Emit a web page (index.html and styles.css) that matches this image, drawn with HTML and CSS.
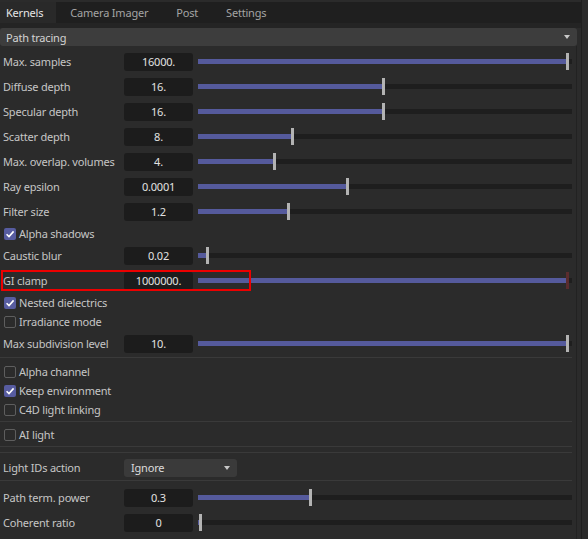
FILE: index.html
```html
<!DOCTYPE html>
<html>
<head>
<meta charset="utf-8">
<link rel="stylesheet" href="styles.css">
</head>
<body>
<div class="app">
  <div class="main">
    <div class="tabbar">
      <div class="tab active first">Kernels</div>
      <div class="tab">Camera Imager</div>
      <div class="tab">Post</div>
      <div class="tab">Settings</div>
    </div>
    <div class="strip"></div>
    <div class="header"><span>Path tracing</span><span class="tri"></span></div>
    <div class="content">
      <div class="row"><div class="label">Max. samples</div><div class="num">16000.</div><div class="slider"><div class="fill" style="width:368px"></div><div class="thumb" style="left:368px"></div></div></div>
      <div class="row"><div class="label">Diffuse depth</div><div class="num">16.</div><div class="slider"><div class="fill" style="width:184px"></div><div class="thumb" style="left:184px"></div></div></div>
      <div class="row"><div class="label">Specular depth</div><div class="num">16.</div><div class="slider"><div class="fill" style="width:184px"></div><div class="thumb" style="left:184px"></div></div></div>
      <div class="row"><div class="label">Scatter depth</div><div class="num">8.</div><div class="slider"><div class="fill" style="width:93px"></div><div class="thumb" style="left:93px"></div></div></div>
      <div class="row"><div class="label">Max. overlap. volumes</div><div class="num">4.</div><div class="slider"><div class="fill" style="width:75px"></div><div class="thumb" style="left:75px"></div></div></div>
      <div class="row"><div class="label">Ray epsilon</div><div class="num">0.0001</div><div class="slider"><div class="fill" style="width:148px"></div><div class="thumb" style="left:148px"></div></div></div>
      <div class="row"><div class="label">Filter size</div><div class="num">1.2</div><div class="slider"><div class="fill" style="width:89px"></div><div class="thumb" style="left:89px"></div></div></div>
      <div class="crow"><span class="cb on"><svg viewBox="0 0 12 12"><path d="M2.6 6.2 L5 8.6 L9.6 3.4" /></svg></span><span class="clabel">Alpha shadows</span></div>
      <div class="row"><div class="label">Caustic blur</div><div class="num">0.02</div><div class="slider"><div class="fill" style="width:8px"></div><div class="thumb" style="left:8px"></div></div></div>
      <div class="row hl"><div class="label">GI clamp</div><div class="num">1000000.</div><div class="slider"><div class="fill" style="width:368px"></div><div class="thumb red" style="left:368px"></div></div><div class="mark"></div></div>
      <div class="crow"><span class="cb on"><svg viewBox="0 0 12 12"><path d="M2.6 6.2 L5 8.6 L9.6 3.4" /></svg></span><span class="clabel">Nested dielectrics</span></div>
      <div class="crow"><span class="cb"></span><span class="clabel">Irradiance mode</span></div>
      <div class="row"><div class="label">Max subdivision level</div><div class="num">10.</div><div class="slider"><div class="fill" style="width:368px"></div><div class="thumb" style="left:368px"></div></div></div>
      <div class="sep s1"></div>
      <div class="crow"><span class="cb"></span><span class="clabel">Alpha channel</span></div>
      <div class="crow"><span class="cb on"><svg viewBox="0 0 12 12"><path d="M2.6 6.2 L5 8.6 L9.6 3.4" /></svg></span><span class="clabel">Keep environment</span></div>
      <div class="crow"><span class="cb"></span><span class="clabel">C4D light linking</span></div>
      <div class="sep s2"></div>
      <div class="crow"><span class="cb"></span><span class="clabel">AI light</span></div>
      <div class="sep s3"></div>
      <div class="sep s4"></div>
      <div class="row"><div class="label">Light IDs action</div><div class="drop"><span>Ignore</span><span class="tri"></span></div></div>
      <div class="sep s5"></div>
      <div class="row"><div class="label">Path term. power</div><div class="num">0.3</div><div class="slider"><div class="fill" style="width:111px"></div><div class="thumb" style="left:111px"></div></div></div>
      <div class="row"><div class="label">Coherent ratio</div><div class="num">0</div><div class="slider"><div class="fill" style="width:1px"></div><div class="thumb" style="left:1px"></div></div></div>
    </div>
  </div>
  <div class="side"></div>
</div>
</body>
</html>
```

FILE: styles.css
```css
* { box-sizing: border-box; }
html, body {
  margin: 0;
  padding: 0;
  background: #2b2b2b;
  width: 588px;
  height: 539px;
  overflow: hidden;
}
body {
  font-family: "Noto Sans", "Open Sans", sans-serif;
  font-size: 11px;
  letter-spacing: -0.2px;
  color: #c6c6c6;
}
.app {
  display: flex;
  height: 539px;
}
.main {
  width: 582px;
  border-right: 1px solid #1f1f1f;
  display: flex;
  flex-direction: column;
}
.side {
  flex: 1;
  background: #2b2b2b;
}
.tabbar {
  margin-top: 2px;
  height: 21px;
  background: #1f1f1f;
  display: flex;
  align-items: stretch;
}
.tab {
  padding: 0 14px;
  line-height: 21px;
  color: #a4a4a4;
  white-space: nowrap;
}
.tab.first { padding-left: 6px; padding-right: 13px; }
.tab.active {
  background: #292929;
  color: #e6e6e6;
}
.strip {
  height: 5px;
  background: #242424;
}
.header {
  width: 577px;
  height: 18px;
  background: #3d3d3d;
  border-radius: 3px;
  display: flex;
  align-items: center;
  justify-content: space-between;
  padding: 0 7px 0 6px;
  color: #d4d4d4;
}
.tri {
  width: 0;
  height: 0;
  border-left: 3.5px solid transparent;
  border-right: 3.5px solid transparent;
  border-top: 4px solid #c8c8c8;
}
.content {
  width: 577px;
  border-right: 1px solid #222;
  padding-top: 3px;
  padding-right: 4px;
  flex: 1;
}
.row {
  height: 25px;
  display: flex;
  align-items: center;
  position: relative;
}
.label {
  width: 124px;
  padding-left: 3px;
  white-space: nowrap;
}
.num {
  width: 69px;
  height: 18px;
  background: #1c1c1c;
  border-radius: 3px;
  text-align: center;
  line-height: 18px;
  color: #e2e2e2;
}
.slider {
  margin-left: 5px;
  width: 374px;
  height: 5px;
  background: #1e1e1e;
  position: relative;
}
.fill {
  height: 5px;
  background: #555a9c;
}
.thumb {
  position: absolute;
  top: -6px;
  width: 3px;
  height: 17px;
  background: #b3b3b3;
}
.thumb.red { background: #5a2c2d; }
.mark {
  position: absolute;
  left: 1px;
  top: 2px;
  width: 250px;
  height: 21px;
  border: 2px solid #ec0000;
}
.crow {
  height: 19px;
  display: flex;
  align-items: center;
  padding-left: 4px;
}
.cb {
  width: 12px;
  height: 12px;
  border: 1.5px solid #5e5e5e;
  border-radius: 2px;
  margin-right: 3px;
  display: inline-flex;
}
.cb.on {
  background: #575ca0;
  border: none;
}
.cb svg {
  width: 12px;
  height: 12px;
  fill: none;
  stroke: #ffffff;
  stroke-width: 1.6;
}
.clabel { white-space: nowrap; }
.sep {
  height: 1px;
  background: #3a3a3a;
}
.s1 { margin: 1px 0 4px; }
.s2 { margin: 2px 0 3px; }
.s3 { margin: 2px 0 0; }
.s4 { margin: 5px 0 2px; }
.s5 { margin: 0 0 4px; }
.drop {
  width: 113px;
  height: 18px;
  background: #3a3a3a;
  border-radius: 3px;
  display: flex;
  align-items: center;
  justify-content: space-between;
  padding: 0 7px 0 7px;
  color: #dcdcdc;
}
```
